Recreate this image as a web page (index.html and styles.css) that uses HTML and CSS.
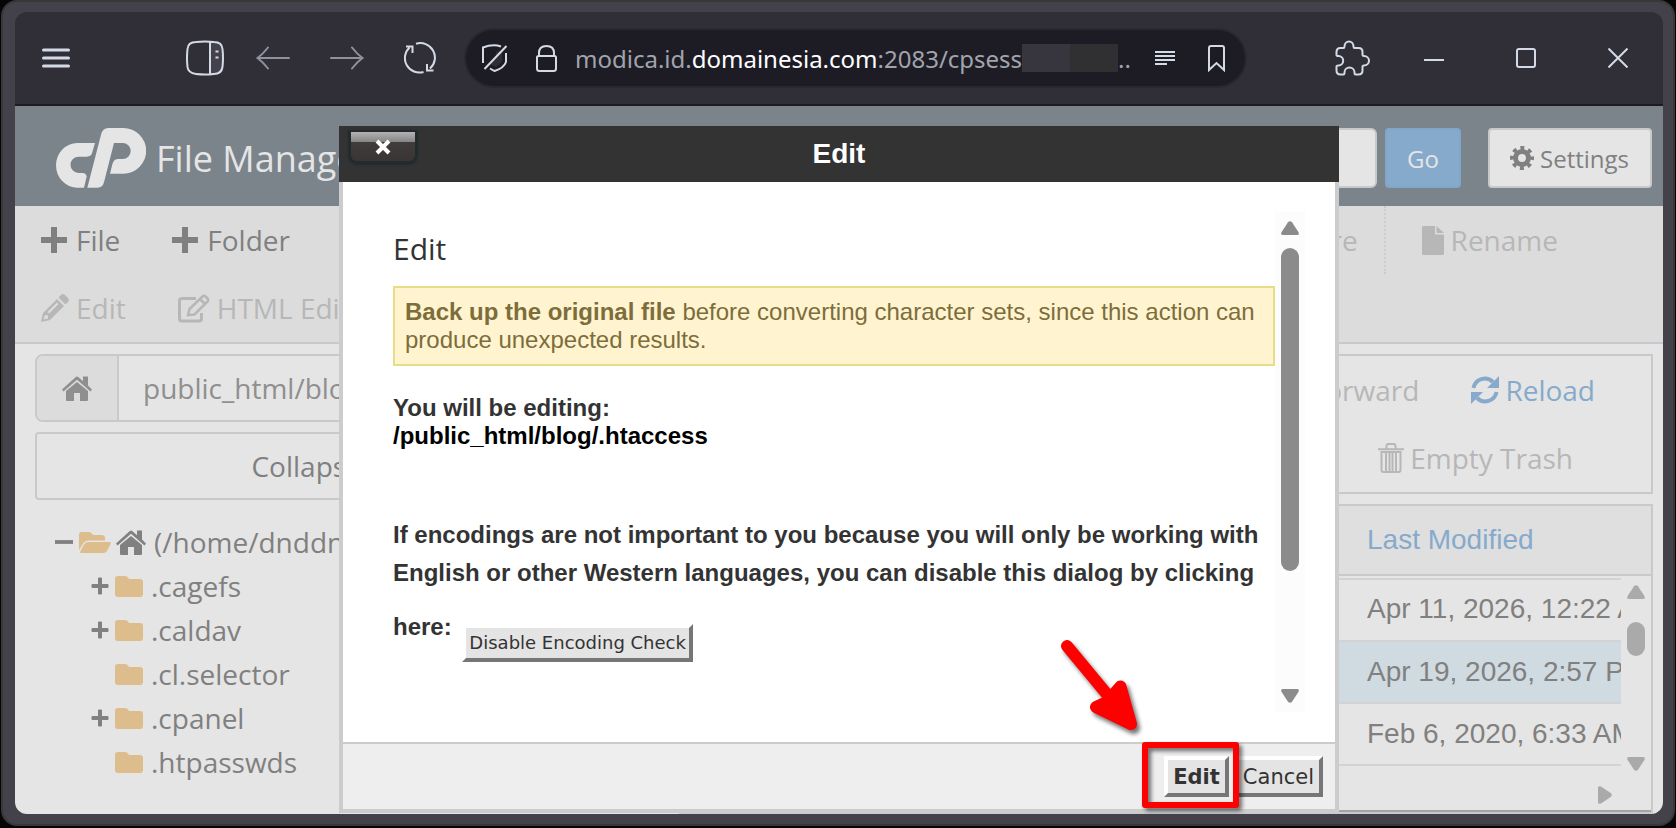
FILE: index.html
```html
<!DOCTYPE html>
<html lang="en">
<head>
<meta charset="utf-8">
<title>File Manager</title>
<link rel="stylesheet" href="styles.css">
</head>
<body>
<svg class="defs" width="0" height="0" aria-hidden="true">
  <symbol id="home" viewBox="0 0 32 26"><path d="M16 7 27 16V25a1 1 0 0 1-1 1H19V18H13V26H6a1 1 0 0 1-1-1V16Z"/><path d="M1 14.500 14.500 2.200Q16 1 17.500 2.200L22 6.300V1.500h5v9L31 14.500 29.500 16.500 16 4.800 2.500 16.500Z"/></symbol>
  <symbol id="folder" viewBox="0 0 28 21"><path d="M0 3Q0 0 3 0H10Q12 0 13 1.500L14 3H25Q28 3 28 6V18Q28 21 25 21H3Q0 21 0 18Z"/></symbol>
  <symbol id="folder-open" viewBox="0 0 32 21"><path d="M0 2.500Q0 0 2.500 0H10Q12 0 13 1.500L14 3H23Q26 3 26 6V8.500H9Q6 8.500 4.500 11L0 18Z"/><path d="M9 10H30.500Q32.500 10 31.500 12L28 19Q27 21 24.500 21H2Q.5 21 1.500 19L5 12.500Q6.500 10 9 10Z"/></symbol>
  <symbol id="plus" viewBox="0 0 26 26"><path d="M10 0H16V10H26V16H16V26H10V16H0V10H10Z"/></symbol>
  <symbol id="thin-plus" viewBox="0 0 18 18"><path d="M7.500 1h3v6.500H17v3h-6.500V17h-3v-6.500H1v-3h6.500Z" stroke="currentColor" stroke-linejoin="round"/></symbol>
  <symbol id="up" viewBox="0 0 18 14"><path d="M7 1.300Q9-1 11 1.300L17.400 11Q18.800 14 16 14H2Q-.8 14 .6 11Z"/></symbol>
</svg>
<div class="frame">
  <header class="browser-bar">
    <button class="icon-btn menu" aria-label="Menu"><svg width="28" height="20" viewBox="0 0 28 20"><path d="M1.500 2H26.500M1.500 10H26.500M1.500 18H26.500" stroke-width="3" stroke-linecap="round"/></svg></button>
    <button class="icon-btn panel-toggle" aria-label="Sidebar"><svg width="38" height="36" viewBox="0 0 38 36"><path d="M24 2h5q7 0 7 7v18q0 7-7 7h-5Z" fill="#43424c" stroke="none"/><path d="M10 2Q19 1 28 2q8 0 8.500 7 1 9 0 18-1 7-8.500 7-9 1-18 0-8-1-8.500-7-1-9 0-18Q2 2 10 2ZM24 2V34"/><path d="M29.500 11.500h3M29.500 17.500h3"/></svg></button>
    <nav class="nav-buttons" aria-label="Browser">
      <button class="icon-btn dim" aria-label="Back"><svg width="34" height="24" viewBox="0 0 34 24"><path d="M33 12H1.500M12 1.500Q7 8 1.500 12 7 16 12 22.500" stroke-linecap="round"/></svg></button>
      <button class="icon-btn dim" aria-label="Forward"><svg width="34" height="24" viewBox="0 0 34 24"><path d="M1 12H32.500M22 1.500Q27 8 32.500 12 27 16 22 22.500" stroke-linecap="round"/></svg></button>
      <button class="icon-btn" aria-label="Reload page"><svg width="32" height="32" viewBox="0 0 32 32"><path d="M12 1.800A14.500 14.500 0 0 1 26 26.500M19.500 30A14.500 14.500 0 0 1 5.500 5.500M2 4.500H8.500V11M29.500 28.500H23V22"/></svg></button>
    </nav>
    <div class="address">
      <svg width="26" height="28" viewBox="0 0 26 28"><path d="M14 8 20 6V18L14 23 7 20 14 12Z" fill="#2f2e38" stroke="none"/><path d="M1 19V3.500Q11-.5 19 2.500M24 9V18Q22 24 12.500 27L8 24.500M2.500 25 24.500 2"/></svg>
      <svg class="lock" width="21" height="27" viewBox="0 0 21 27"><path d="M3 11V8Q3 1 10.500 1T18 8V11M1 12.500Q1 11 2.500 11H18.500Q20 11 20 12.500V23.500Q20 26 17.500 26H3.500Q1 26 1 23.500Z"/></svg>
      <p class="url">modica.id.<b>domainesia.com</b>:2083/cpsess</p><span class="redacted"></span><p class="url">..</p>
      <button class="icon-btn reader" aria-label="Reader"><svg width="20" height="14" viewBox="0 0 20 14"><path d="M0 1H20M0 5H20M0 9H20M0 13H12"/></svg></button>
      <button class="icon-btn bookmark" aria-label="Bookmark"><svg width="17" height="27" viewBox="0 0 17 27"><path d="M1 25V3Q1 1 3 1H14Q16 1 16 3V25L8.500 18Z"/></svg></button>
    </div>
    <button class="icon-btn" aria-label="Extensions"><svg width="36" height="36" viewBox="0 0 36 36"><path d="M1.500 15V12q0-4 4-4h3q1 0 1-1.500a4.500 5 0 0 1 9 0q0 1.500 1 1.500h4q4 0 4 4v3q0 1 1.500 1a5 4.700 0 0 1 0 9.400q-1.500 0-1.500 1v4q0 4-4 4h-3q-1 0-1-2a5 5 0 0 0-10 0q0 2-1 2h-3q-4 0-4-4v-4q0-1 2-1a4.700 4.700 0 0 0 0-9.400q-2 0-2-1Z"/></svg></button>
    <div class="window-buttons">
      <button class="icon-btn" aria-label="Minimize"><svg width="20" height="20" viewBox="0 0 20 20"><path d="M0 12H20"/></svg></button>
      <button class="icon-btn" aria-label="Maximize"><svg width="20" height="20" viewBox="0 0 20 20"><rect x="1" y="1" width="18" height="18" rx="2"/></svg></button>
      <button class="icon-btn" aria-label="Close window"><svg width="20" height="20" viewBox="0 0 20 20"><path d="M.5.5 19.500 19.500M19.500.5.5 19.500"/></svg></button>
    </div>
  </header>

  <main class="page">
    <div class="app-header">
      <svg class="logo" width="90" height="60" viewBox="168 384 270 180" aria-label="cPanel"><path d="M262 563 303 404Q308 384 325 384H370A68 68 0 0 1 370 521H330L337 493Q341 477 355 477H368A24 24 0 0 0 368 429H342L312 547Q308 563 293 563ZM285 429H232A64 67 0 0 0 232 563H252L260 530Q258 519 248 519H236A24 24 0 0 1 236 470H260Q273 470 276 460Z"/></svg>
      <h1>File Manager</h1>
      <input class="search" type="text" aria-label="Search">
      <button class="go">Go</button>
      <button class="settings"><svg width="24" height="24" viewBox="0 0 24 24"><circle cx="12" cy="12" r="6.500" stroke-width="5"/><circle cx="12" cy="12" r="10" stroke-width="4" stroke-dasharray="3.900 3.954" stroke-dashoffset="1.950"/></svg>Settings</button>
    </div>

    <div class="tools">
      <div class="tool-row">
        <button class="tool"><svg width="26" height="26"><use href="#plus"/></svg>File</button>
        <button class="tool"><svg width="26" height="26"><use href="#plus"/></svg>Folder</button>
        <button class="tool restore" disabled>Restore</button>
        <button class="tool rename" disabled><svg width="22" height="29" viewBox="0 0 22 29"><path d="M0 1.500Q0 0 1.500 0H13V8.500H22V27.500Q22 29 20.500 29H1.500Q0 29 0 27.500ZM14.500 0 22 7H14.500Z"/></svg>Rename</button>
      </div>
      <div class="tool-row">
        <button class="tool close" disabled><svg width="28" height="28" viewBox="0 0 28 28"><path fill-rule="evenodd" d="M2 19 16 5 23 12 9 26 0 28ZM4 21 2.500 25.500 7 24.500V21.500ZM6.500 18 8 19.500 17.500 10 16 8.500ZM17.500 3.500 20 1Q22 -.8 24 1L27 4Q28.700 6 27 8L24.500 10.500Z"/></svg>Edit</button>
        <button class="tool close" disabled><svg width="32" height="29" viewBox="0 0 32 29"><path d="M18 4.500H4Q1.500 4.500 1.500 7V24.500Q1.500 27 4 27H21Q23.500 27 23.500 24.500V19" fill="none" stroke="currentColor" stroke-width="3"/><path d="M10 21 11.500 15 24.500 2.500Q26 1 27.500 2.500L29.500 4.500Q31 6 29.500 7.500L16.500 20.500ZM22.500 5.500 26.500 9.500" fill="none" stroke="currentColor" stroke-width="2.500"/></svg>HTML Editor</button>
      </div>
    </div>

    <div class="workspace">
      <aside class="sidebar">
        <div class="path">
          <button class="path-home" aria-label="Home"><svg width="32" height="26"><use href="#home"/></svg></button>
          <input type="text" aria-label="Path" value="public_html/blog">
        </div>
        <button class="collapse">Collapse All</button>
        <ul class="tree">
          <li class="root"><span class="toggle"><svg width="18" height="18" viewBox="0 0 18 18"><path d="M0 7.500H18V10.500H0Z" stroke="currentColor" stroke-width=".8"/></svg></span><svg class="fold" width="32" height="21"><use href="#folder-open"/></svg><svg class="root-home" width="32" height="26"><use href="#home"/></svg>(/home/dnddn</li>
          <li><span class="toggle"><svg width="18" height="18"><use href="#thin-plus"/></svg></span><svg class="fold" width="28" height="21"><use href="#folder"/></svg>.cagefs</li>
          <li><span class="toggle"><svg width="18" height="18"><use href="#thin-plus"/></svg></span><svg class="fold" width="28" height="21"><use href="#folder"/></svg>.caldav</li>
          <li><span class="toggle"></span><svg class="fold" width="28" height="21"><use href="#folder"/></svg>.cl.selector</li>
          <li><span class="toggle"><svg width="18" height="18"><use href="#thin-plus"/></svg></span><svg class="fold" width="28" height="21"><use href="#folder"/></svg>.cpanel</li>
          <li><span class="toggle"></span><svg class="fold" width="28" height="21"><use href="#folder"/></svg>.htpasswds</li>
        </ul>
      </aside>

      <section class="files">
        <div class="actions">
          <div class="action-row">
            <button class="tool" disabled>Forward</button>
            <button class="tool reload"><svg width="28" height="28" viewBox="0 0 28 28"><path d="M2.500 12A11.500 11.500 0 0 1 22 6M25.500 16A11.500 11.500 0 0 1 6 22" fill="none" stroke="currentColor" stroke-width="4"/><path d="M28 0V12H16ZM0 28V16H12Z"/></svg>Reload</button>
          </div>
          <div class="action-row trash-row">
            <button class="tool" disabled><svg width="26" height="30" viewBox="0 0 26 30"><path d="M0 6.200H26M8.500 6V3Q8.500 1 10.500 1H15.500Q17.500 1 17.500 3V6M3.500 9H22.500V27Q22.500 29 20.500 29H5.500Q3.500 29 3.500 27ZM8 10V28M11.500 10V28M14.500 10V28M18 10V28" fill="none" stroke="currentColor" stroke-width="2"/></svg>Empty Trash</button>
          </div>
        </div>
        <div class="list">
          <table>
            <colgroup><col><col class="date-col"><col class="bar-col"></colgroup>
            <thead><tr><th></th><th><a href="#">Last Modified</a></th><th></th></tr></thead>
            <tbody>
              <tr><td></td><td>Apr 11, 2026, 12:22 AM</td><td></td></tr>
              <tr class="selected"><td></td><td>Apr 19, 2026, 2:57 PM</td><td></td></tr>
              <tr><td></td><td>Feb 6, 2020, 6:33 AM</td><td></td></tr>
            </tbody>
          </table>
          <div class="list-bar"><svg width="18" height="14"><use href="#up"/></svg><span class="list-thumb"></span><svg class="flip" width="18" height="14"><use href="#up"/></svg></div>
          <div class="list-hbar"><svg width="14" height="18" viewBox="0 0 14 18"><path d="M12.700 7Q15 9 12.700 11L3 17.400Q0 18.800 0 16V2Q0-.8 3 .6Z"/></svg></div>
        </div>
      </section>
    </div>

    <div class="dialog" role="dialog" aria-labelledby="dialog-title">
      <div class="dialog-head">
        <button class="dialog-close" aria-label="Close"><svg width="18" height="18" viewBox="0 0 18 18"><path d="M3 3 15 15M15 3 3 15"/></svg></button>
        <h2 id="dialog-title">Edit</h2>
      </div>
      <div class="dialog-body">
        <div class="dialog-content">
          <h3>Edit</h3>
          <p class="notice"><b>Back up the original file</b> before converting character sets, since this action can produce unexpected results.</p>
          <p class="editing">You will be editing:<br><span>/public_html/blog/.htaccess</span></p>
          <p class="encoding">If encodings are not important to you because you will only be working with English or other Western languages, you can disable this dialog by clicking here: <button class="bevel small">Disable Encoding Check</button></p>
        </div>
        <div class="scrollbar"><svg width="18" height="14"><use href="#up"/></svg><span class="thumb"></span><svg class="flip" width="18" height="14"><use href="#up"/></svg></div>
      </div>
      <div class="dialog-foot">
        <span class="marked"><button class="bevel strong">Edit</button>
          <span class="mark-box"></span>
          <svg class="mark-arrow" width="100" height="110" viewBox="0 0 100 110"><path d="M13 16 66 80" stroke="#f00" stroke-width="12" stroke-linecap="round"/><path d="M66.500 56.500 77 94 42 77 53 72Z" fill="#f00" stroke="#f00" stroke-width="12" stroke-linejoin="round"/></svg>
        </span>
        <button class="bevel">Cancel</button>
      </div>
    </div>
  </main>
</div>
</body>
</html>
```

FILE: styles.css
```css
* { box-sizing: border-box; }
html, body { height: 100%; margin: 0; }
body {
  display: flex;
  padding: 0 1px 2px;
  background: #060608;
  font-family: "Open Sans", "Noto Sans", sans-serif;
  font-size: 28px;
  color: #808080;
}
h1, h2, h3, p, ul { margin: 0; padding: 0; font-weight: normal; }
button, input { margin: 0; padding: 0; border: 0; font: inherit; color: inherit; background: none; }
svg { display: block; flex: none; fill: currentColor; }
.defs { position: absolute; }

.frame {
  flex: 1;
  min-width: 0;
  display: flex;
  flex-direction: column;
  padding: 10px 10px 10px 12px;
  border: 2px solid #383838;
  border-radius: 16px;
  background: #43424b;
}

/* Browser chrome */
.browser-bar {
  flex: none;
  display: flex;
  align-items: center;
  height: 94px;
  padding: 0 35px 0 27px;
  border-bottom: 2px solid #1c1b24;
  border-radius: 12px 12px 0 0;
  background: #302f38;
  color: #d3dae6;
}
.icon-btn { flex: none; display: flex; }
.icon-btn svg, .address > svg { fill: none; stroke: currentColor; stroke-width: 2; }
.dim { color: #90919e; }
.menu { margin-right: 116px; }
.panel-toggle { margin-right: 32px; }
.nav-buttons { display: flex; align-items: center; gap: 40px; }
.address {
  flex: 1;
  min-width: 0;
  display: flex;
  align-items: center;
  height: 60px;
  margin: 0 88px 0 28px;
  padding: 0 20px 0 16px;
  border: 2px solid #292831;
  border-radius: 30px;
  background: #1d1c25;
}
.lock { margin: 0 18px 0 28px; }
.url { font-family: "Noto Sans", "Open Sans", sans-serif; font-size: 24px; color: #a2a4ac; white-space: nowrap; }
.url b { font-weight: normal; color: #fff; }
.redacted { flex: none; width: 96px; height: 28px; background: linear-gradient(90deg, #37363f 50%, #303033 50%); }
.reader { margin-left: auto; }
.bookmark { margin-left: 33px; }
.window-buttons { display: flex; gap: 72px; margin-left: 53px; }

/* Page */
.page {
  position: relative;
  flex: 1;
  min-height: 0;
  display: flex;
  flex-direction: column;
  overflow: hidden;
  border-radius: 0 0 12px 12px;
  background: #e5e5e5;
}
.app-header {
  flex: none;
  display: flex;
  align-items: center;
  height: 100px;
  padding: 4px 11px 0 41px;
  background: #7b838b;
  color: #e5e5e5;
}
.app-header h1 { margin-left: 10px; font-size: 36px; white-space: nowrap; }
.search { width: 400px; height: 60px; margin-left: auto; border: 2px solid #c9c9c9; border-radius: 6px; background: #e5e5e5; }
.go, .settings { height: 60px; border-radius: 4px; font-size: 24px; }
.go { width: 76px; margin: 0 27px 0 8px; border: 2px solid #80a6c9; background: #86aacc; }
.settings {
  display: flex;
  align-items: center;
  gap: 6px;
  padding: 0 21px 0 20px;
  border: 2px solid #c9c9c9;
  background: #e5e5e5;
  color: #808080;
}
.settings svg { fill: none; stroke: currentColor; }

.tools { flex: none; border-bottom: 2px solid #c5cacd; background: #dcdcdc; }
.tool-row, .action-row { display: flex; height: 68px; }
.tool { display: flex; align-items: center; gap: 9px; padding: 0 26px; white-space: nowrap; }
.tool.close { gap: 7px; }
.tool:disabled { color: #b7b7b7; }
.restore { margin-left: auto; border-right: 2px dotted #cbcbcb; }
.tool.rename { gap: 7px; padding: 0 105px 0 36px; }

.workspace { flex: 1; min-height: 0; display: flex; gap: 62px; padding: 10px 10px 0 20px; }
.sidebar { flex: 0 0 36%; min-width: 0; }
.path { display: flex; height: 68px; border: 2px solid #c9c9c9; border-radius: 8px; overflow: hidden; color: #8f8f8f; }
.path-home { display: flex; align-items: center; justify-content: center; width: 82px; border-right: 2px solid #c9c9c9; background: #dcdcdc; }
.path input { flex: 1; min-width: 0; padding: 0 24px; }
.collapse { width: 100%; height: 68px; margin-top: 10px; border: 2px solid #c9c9c9; border-radius: 4px; }
.tree { margin-top: 20px; padding-left: 18px; list-style: none; }
.tree li { display: flex; align-items: center; height: 44px; padding-left: 36px; line-height: 44px; white-space: nowrap; }
.tree .root { padding-left: 0; }
.toggle { width: 26px; padding-left: 2px; }
.tree .fold { margin-right: 8px; color: #debd8d; }
.tree .root .fold { margin-right: 4px; }
.root-home { margin-right: 7px; }

.files { flex: 1; min-width: 0; display: flex; flex-direction: column; gap: 10px; }
.actions { border: 2px solid #c9c9c9; }
.action-row { justify-content: flex-end; padding-right: 30px; }
.trash-row { padding-right: 52px; }
.actions .tool { gap: 6px; }
.reload { color: #86aacc; }

.list { position: relative; flex: 1; min-height: 0; border: 2px solid #c9c9c9; font-family: "Liberation Sans", Arial, sans-serif; }
.list table { width: 100%; table-layout: fixed; border-collapse: separate; border-spacing: 0; }
.date-col { width: 254px; }
.bar-col { width: 30px; }
.list th { height: 70px; padding: 0; border-bottom: 2px solid #c9c9c9; background: #dfdfdf; text-align: left; font-weight: normal; }
.list td { height: 62px; padding: 0; overflow: hidden; border-bottom: 2px solid #d3d3d3; white-space: nowrap; }
.list tbody tr:first-child td { height: 66px; padding-top: 2px; background: linear-gradient(#d3d3d3, #d3d3d3) 0 2px / 100% 2px no-repeat; }
.list tbody tr td:last-child, .list tbody tr:first-child td:last-child { border-color: transparent; background: none; }
.list .selected td:not(:last-child) { background: #d0dbe1; }
.list a { color: #86aacc; text-decoration: none; }
.list-bar {
  position: absolute;
  top: 70px;
  right: 0;
  bottom: 32px;
  width: 30px;
  display: flex;
  flex-direction: column;
  align-items: center;
  padding: 9px 0;
  color: #aaa;
}
.list-thumb { width: 18px; height: 34px; margin: 23px 0 auto; border-radius: 9px; background: #aaa; }
.list-hbar {
  position: absolute;
  left: 0;
  right: 0;
  bottom: 0;
  display: flex;
  justify-content: flex-end;
  align-items: center;
  height: 32px;
  padding-right: 39px;
  border-bottom: 2px solid #a3a3a3;
  color: #aaa;
}
.flip { transform: rotate(180deg); }

/* Dialog */
.dialog {
  position: absolute;
  top: 20px;
  right: 0;
  bottom: 1px;
  left: 0;
  display: flex;
  flex-direction: column;
  max-width: 1000px;
  margin: 0 auto;
  background: #fff;
  color: #333;
  font-family: "Liberation Sans", Arial, sans-serif;
  font-size: 24px;
  line-height: 28px;
}
.dialog-head { position: relative; flex: none; display: flex; align-items: center; justify-content: center; height: 56px; background: #333; color: #fff; }
.dialog-head h2 { font-size: 28px; font-weight: bold; }
.dialog-close {
  position: absolute;
  top: 6px;
  left: 12px;
  display: flex;
  align-items: center;
  justify-content: center;
  width: 64px;
  height: 29px;
  border-radius: 0 0 6px 6px;
  background: linear-gradient(#b5b2b3, #868384 35%, #403c3c 36%, #3a3535);
  box-shadow: 0 1px 2px 3px #222b2e;
}
.dialog-close svg { stroke: #fff; stroke-width: 4; }
.dialog-body { flex: 1; min-height: 0; display: flex; padding: 30px; border: solid #ccc; border-width: 0 4px; }
.dialog-content { flex: 1; padding: 19px 0 0 20px; }
.dialog-content h3 { margin-bottom: 19px; font: 30px/36px "Open Sans", sans-serif; }
.notice { padding: 10px; border: 2px solid #e6dd87; background: #fff4cf; color: #7d6d3b; }
.editing { margin-top: 28px; font-weight: bold; }
.editing span { color: #000; }
.encoding { margin-top: 66px; font-weight: bold; line-height: 38px; }
.scrollbar { width: 30px; display: flex; flex-direction: column; align-items: center; padding: 9px 0; background: #fcfcfc; color: #8b8b8b; }
.thumb { width: 18px; height: 323px; margin: 13px 0 auto; border-radius: 9px; background: #8b8b8b; }
.dialog-foot {
  flex: none;
  display: flex;
  align-items: center;
  justify-content: flex-end;
  gap: 5px;
  height: 71px;
  padding: 0 12px;
  border: 4px solid #ccc;
  border-top-width: 2px;
  background: #eee;
}
.bevel {
  height: 41px;
  padding: 0 5px;
  border: 4px solid;
  border-color: #fff #767676 #767676 #fff;
  background: #e4e4e4;
  color: #333;
  font: 21px/30px "DejaVu Sans", Verdana, sans-serif;
}
.bevel.strong { font-weight: bold; }
.bevel.small { height: 38px; margin: 32px 0 4px 4px; padding: 0 3px; font-size: 18px; vertical-align: middle; }
.marked { position: relative; display: flex; }
.mark-box {
  position: absolute;
  inset: -14px -10px -11px -22px;
  border: 6px solid #f00;
  border-radius: 3px;
  filter: drop-shadow(3px 3px 2px rgba(0, 0, 0, .55));
  pointer-events: none;
}
.mark-arrow {
  position: absolute;
  right: 75px;
  bottom: 57px;
  overflow: visible;
  filter: drop-shadow(3px 4px 2px rgba(0, 0, 0, .55));
  pointer-events: none;
}
.list th:nth-child(2), .list td:nth-child(2) { width: 254px; }
```
